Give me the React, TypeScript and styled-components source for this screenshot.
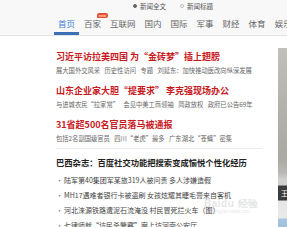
import React from "react";
import styled, { createGlobalStyle } from "styled-components";

const Global = createGlobalStyle`
  html, body { margin: 0; padding: 0; background: #fff; overflow: hidden; }
  body { font-family: "Noto Sans CJK SC", "Noto Sans", sans-serif; width: 287px; height: 227px; }
`;

const Page = styled.div`
  width: 287px;
  height: 227px;
  overflow: hidden;
  position: relative;
`;

const TopArea = styled.header`
  background: #f8f8f8;
  border-bottom: 1px solid #e2e2e2;
`;

const RadioRow = styled.div`
  height: 12px;
  display: flex;
  align-items: center;
  padding-left: 133px;
  gap: 14px;
`;

const RadioOption = styled.label`
  display: flex;
  align-items: center;
  gap: 3px;
  font-size: 6.5px;
  line-height: 12px;
  color: #555;
`;

const RadioDot = styled.span<{ $on?: boolean }>`
  width: 4px;
  height: 4px;
  border-radius: 50%;
  box-sizing: border-box;
  border: 1px solid ${(p) => (p.$on ? "#666" : "#bbb")};
  background: ${(p) => (p.$on ? "#666" : "#fff")};
`;

const Nav = styled.nav`
  height: 23px;
  display: flex;
  align-items: stretch;
  padding-left: 54px;
  gap: 1px;
`;

const Tab = styled.a<{ $active?: boolean }>`
  position: relative;
  display: flex;
  align-items: center;
  padding: 2px 4px 0;
  font-size: 8.5px;
  color: ${(p) => (p.$active ? "#3b7fd4" : "#666")};
  white-space: nowrap;
  box-sizing: border-box;
  border-bottom: 3px solid ${(p) => (p.$active ? "#3b6fb8" : "transparent")};
`;

const NewBadge = styled.span`
  position: absolute;
  top: 1px;
  right: -3px;
  background: #e8502d;
  color: #fff;
  font-family: "Liberation Sans", sans-serif;
  font-size: 4px;
  line-height: 5px;
  padding: 0 2px;
  border-radius: 2px 2px 2px 0;
`;

const Body = styled.div`
  display: flex;
  gap: 16px;
  padding-left: 56px;
`;

const Main = styled.main`
  width: 206px;
  flex: none;
  padding-top: 14px;
`;

const Block = styled.section`
  margin-bottom: 8px;
`;

const RedHead = styled.h2`
  margin: 0;
  font-size: 9px;
  line-height: 14px;
  font-weight: 700;
  color: #c8191e;
  white-space: nowrap;
`;

const Sub = styled.p`
  margin: 2px 0 0;
  font-size: 6.3px;
  line-height: 10px;
  color: #666;
  white-space: nowrap;
  word-spacing: 3px;
`;

const Divider = styled.hr`
  margin: -4px 0 0;
  border: none;
  border-top: 1px solid #ececec;
  width: 206px;
`;

const BlackHead = styled.h3`
  margin: 7px 0 0;
  font-size: 8.3px;
  line-height: 12px;
  font-weight: 700;
  color: #222;
  white-space: nowrap;
`;

const List = styled.ul`
  list-style: none;
  margin: 4.5px 0 0;
  padding: 0;
`;

const Item = styled.li`
  font-size: 7px;
  line-height: 15px;
  color: #444;
  white-space: nowrap;
  &::before {
    content: "·";
    margin-right: 1px;
    color: #777;
  }
`;

const Aside = styled.aside`
  flex: none;
  width: 100px;
  margin-top: 12px;
`;

const Photo = styled.div`
  position: relative;
  height: 179px;
  background: linear-gradient(
    to bottom,
    #c2c0ba 0px,
    #b3b1ab 60px,
    #aaa9a4 110px,
    #b9b8b4 125px,
    #d2d2cf 132px,
    #cfcfcc 137px,
    #3e3e3e 138px,
    #3a3a3a 152px,
    #e6e6e6 153px,
    #e9e9e9 170px,
    #a9c6e2 171px,
    #9fbfdf 179px
  );
`;

const PhotoCaption = styled.span`
  position: absolute;
  top: 140px;
  left: 3px;
  font-size: 7px;
  line-height: 10px;
  color: #fff;
`;

const Watermark = styled.div`
  position: absolute;
  left: 204px;
  top: 198px;
  display: flex;
  flex-direction: column;
  align-items: flex-start;
  color: rgba(190, 190, 190, 0.4);
  font-family: "Liberation Sans", sans-serif;
  pointer-events: none;
`;

const WmTitle = styled.span`
  font-size: 10px;
  line-height: 11px;
  font-weight: 700;
  letter-spacing: 0.5px;
`;

const WmUrl = styled.span`
  font-size: 4.5px;
  line-height: 6px;
  padding-left: 10px;
`;

const tabs = ["首页", "百家", "互联网", "国内", "国际", "军事", "财经", "体育", "娱乐"];

export default function App() {
  return (
    <Page>
      <Global />
      <TopArea>
        <RadioRow>
          <RadioOption>
            <RadioDot $on />
            新闻全文
          </RadioOption>
          <RadioOption>
            <RadioDot />
            新闻标题
          </RadioOption>
        </RadioRow>
        <Nav>
          {tabs.map((t, i) => (
            <Tab key={t} $active={i === 0}>
              {t}
              {t === "百家" && <NewBadge>new</NewBadge>}
            </Tab>
          ))}
        </Nav>
      </TopArea>
      <Body>
        <Main>
          <Block>
            <RedHead>习近平访拉美四国 为“金砖梦”插上翅膀</RedHead>
            <Sub>展大国外交风采 历史性访问 专题 刘延东：加快推动医改向纵深发展</Sub>
          </Block>
          <Block>
            <RedHead>山东企业家大胆“提要求” 李克强现场办公</RedHead>
            <Sub>与进城农民“拉家常” 会见中美工商领袖 简政放权 政府已公告69年</Sub>
          </Block>
          <Block>
            <RedHead>31省超500名官员落马被通报</RedHead>
            <Sub>包括2名副国级官员 四川“老虎”最多 广东湖北“苍蝇”密集</Sub>
          </Block>
          <Divider />
          <BlackHead>巴西杂志：百度社交功能把搜索变成愉悦个性化经历</BlackHead>
          <List>
            <Item>陆军第40集团军某旅319人被问责 多人涉嫌造假</Item>
            <Item>MH17遇难者银行卡被盗刷 女孩炫耀其睫毛膏来自客机</Item>
            <Item>河北涞源铁路遭泥石流淹没 村民冒死拦火车（图）</Item>
            <Item>七律师就“访民杀警察”案上访河南公安厅</Item>
          </List>
        </Main>
        <Aside>
          <Photo>
            <PhotoCaption>王</PhotoCaption>
          </Photo>
        </Aside>
      </Body>
      <Watermark>
        <WmTitle>Baidu 经验</WmTitle>
        <WmUrl>jingyan.baidu.com</WmUrl>
      </Watermark>
    </Page>
  );
}
